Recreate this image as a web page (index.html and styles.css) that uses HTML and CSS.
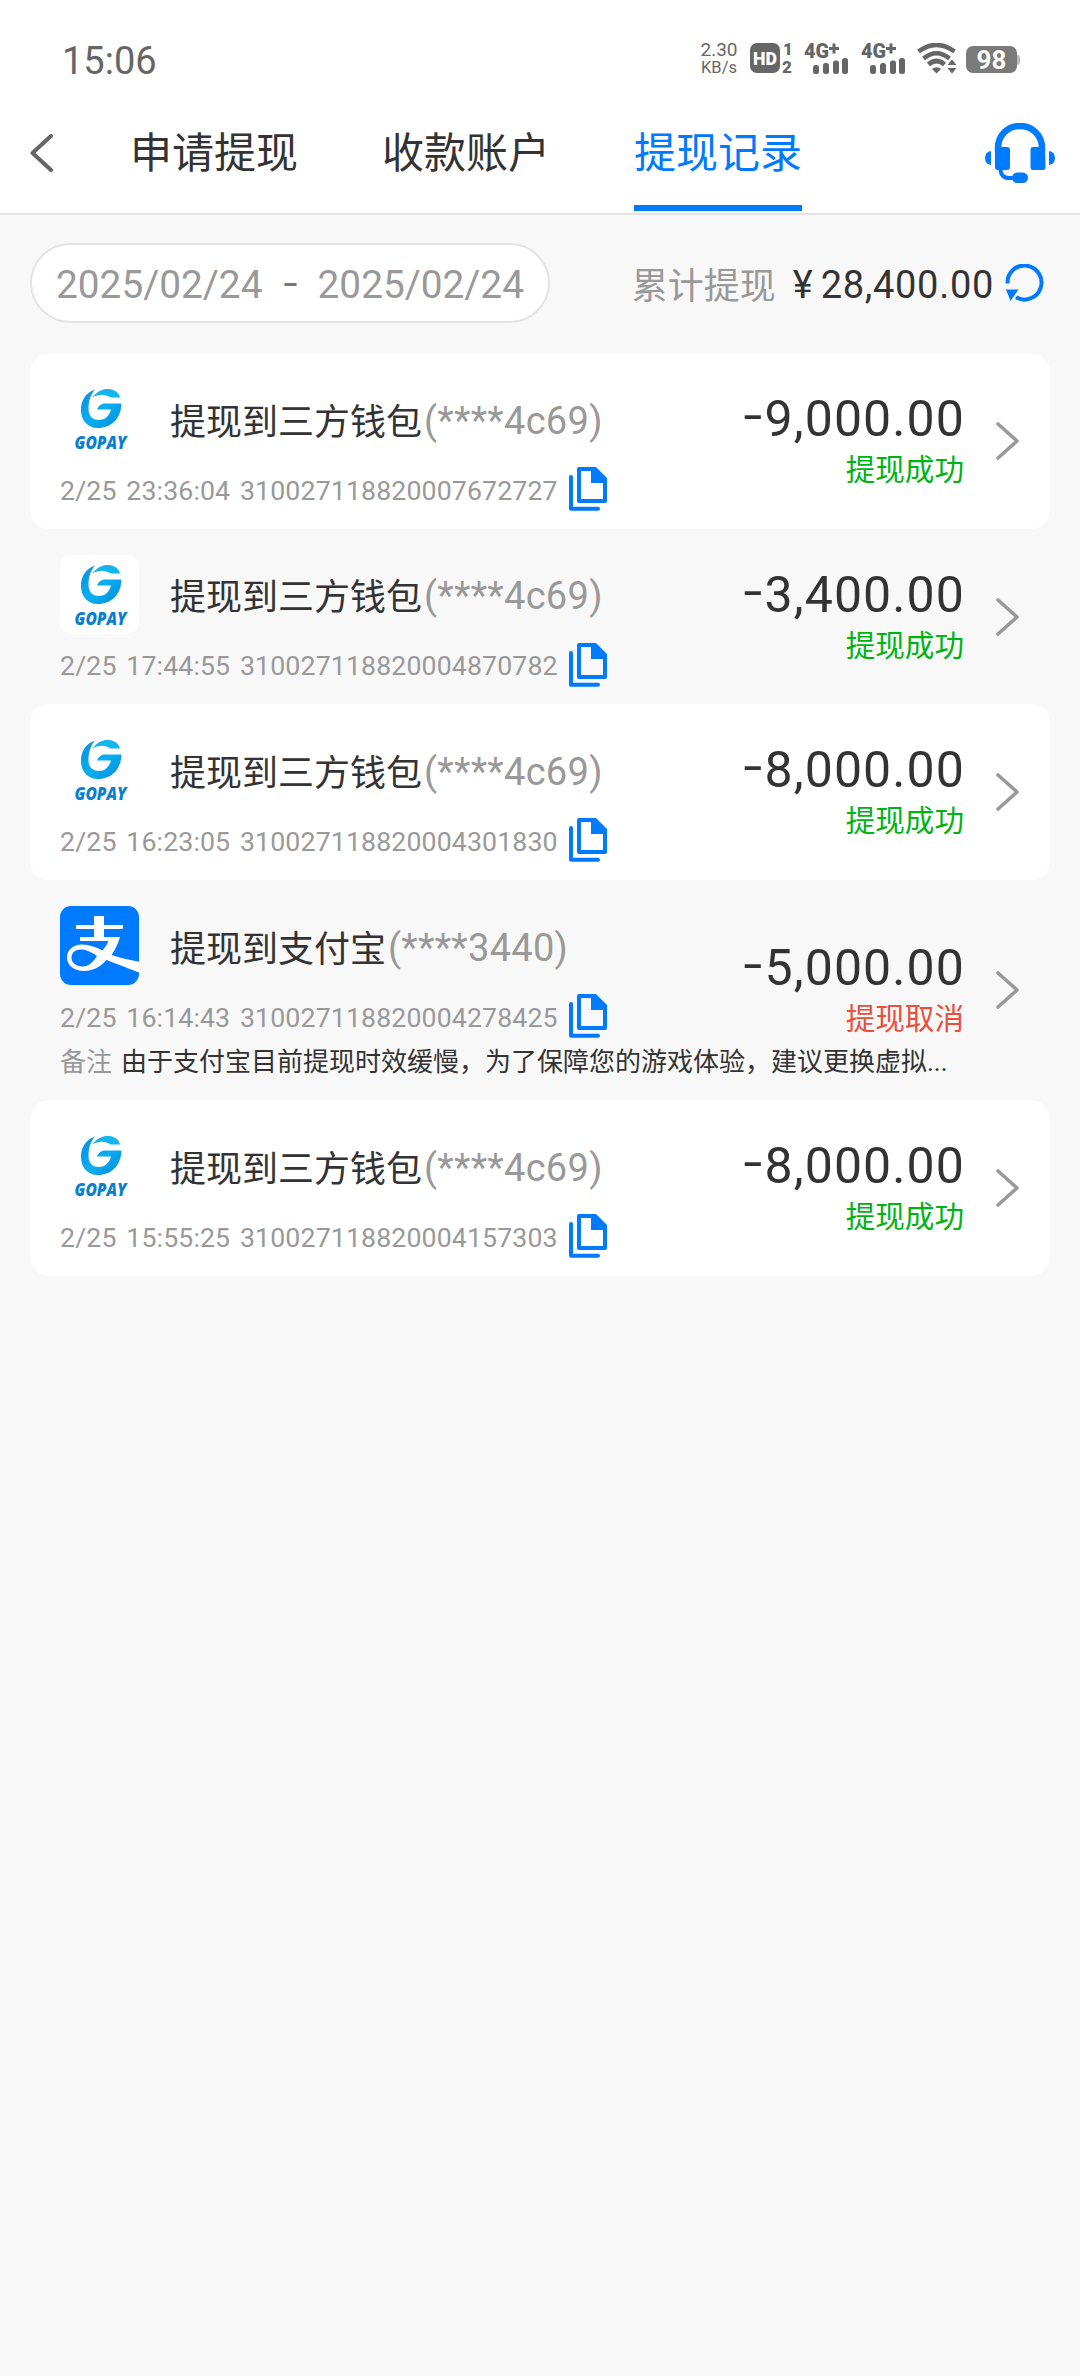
FILE: index.html
```html
<!DOCTYPE html>
<html lang="zh-CN">
<head>
    <meta charset="UTF-8">
    <title>提现记录</title>
    <link rel="stylesheet" href="styles.css">
</head>
<body>
    <!-- Shared icons -->
    <svg class="symbols" width="0" height="0">
        <defs>
            <linearGradient id="gopayFill" x1="0" y1="0" x2="1" y2="1">
                <stop offset="0" stop-color="#0a8fe0"/>
                <stop offset="0.55" stop-color="#0aaef0"/>
                <stop offset="1" stop-color="#0088dc"/>
            </linearGradient>
        </defs>
        <symbol id="gopay" viewBox="0 0 79 79">
            <rect width="79" height="79" rx="11" fill="#fff"/>
            <path fill="url(#gopayFill)" d="M35 10.500C25 14 20.500 22.500 21 32C21.500 42 28 49 38 49C51 49 61 40 61.500 24.500H45C41 24.500 38.500 27 37 30.500H51C49 37 45 41 39 41C32 41 28.500 36.500 28.500 30C28.500 21.500 31 15 35 10.500Z"/>
            <path fill="#12b5ee" d="M32.500 18.500C37 12 43 9.500 49 10C55 10.500 59 14 60 18.500H50.500C45 14.500 38 15 32.500 18.500Z"/>
            <text x="40.500" y="70" class="gopay-name" text-anchor="middle" textLength="52" lengthAdjust="spacingAndGlyphs">GOPAY</text>
        </symbol>
        <symbol id="alipay" viewBox="0 0 79 79">
            <rect width="79" height="79" fill="#007aff"/>
            <path fill="#fff" d="M34 10H44V19H63V23H44V31H60C58 38 55 44 51.500 49C60 52 70 54 80 56V67C68 62 57 58 46.500 54C40 61 33 65 24 65C14 65 7 59.500 7 51.500C7 44 13 38.500 22 38.500C29 38.500 36 41 42.500 44.500C45 41.500 47 38.500 48.500 35H20V31H34V23H16V19H34Z"/>
            <path fill="#007aff" d="M37 50C31 46 26 43.500 21 43.500C15 43.500 11.500 47 11.500 51.500C11.500 57 16 60.500 22.500 60.500C29 60.500 33.500 55.500 37 50Z"/>
        </symbol>
        <symbol id="copy" viewBox="0 0 38 44">
            <path d="M2 10V41.800H29" fill="none" stroke="#007aff" stroke-width="4" stroke-linecap="round" stroke-linejoin="round"/>
            <path fill="#007aff" fill-rule="evenodd" d="M10 0H27L38 11V34Q38 36 36 36H10Q8 36 8 34V2Q8 0 10 0ZM12 4V32H34V16H22V4Z"/>
        </symbol>
        <symbol id="arrow" viewBox="0 0 24 38">
            <path d="M2 2L21 19L2 36" fill="none" stroke="#999" stroke-width="3.600" stroke-linecap="round" stroke-linejoin="round"/>
        </symbol>
        <symbol id="signal" viewBox="0 0 46 32">
            <text x="0" y="14.500" class="net-type" textLength="25" lengthAdjust="spacingAndGlyphs">4G</text>
            <path d="M25 5.500H35M30 0.500V10.500" stroke="#666" stroke-width="3"/>
            <rect x="9" y="22" width="6" height="9" rx="2.500"/>
            <rect x="19" y="20" width="6" height="11" rx="2.500"/>
            <rect x="29" y="17.500" width="6" height="13.500" rx="2.500"/>
            <rect x="38" y="15" width="6" height="16" rx="2.500"/>
        </symbol>
    </svg>

    <div class="status-bar">
        <span class="time">15:06</span>
        <div class="status-icons">
            <div class="speed">
                <span class="speed-value">2.30</span>
                <span class="speed-unit">KB/s</span>
            </div>
            <svg class="hd" viewBox="0 0 44 31">
                <rect width="30" height="30" rx="7"/>
                <text x="3" y="22" class="hd-text" textLength="24" lengthAdjust="spacingAndGlyphs">HD</text>
                <text x="33" y="12" class="hd-num">1</text>
                <text x="32" y="30" class="hd-num">2</text>
            </svg>
            <svg class="signal"><use href="#signal"/></svg>
            <svg class="signal"><use href="#signal"/></svg>
            <svg class="wifi" viewBox="0 0 40 31">
                <g fill="none" stroke="#666" stroke-width="4.600">
                    <path d="M1.500 8.500Q19.500 -4.500 37.500 8.500"/>
                    <path d="M6.500 15.500Q19.500 5 32.500 15.500"/>
                    <path d="M11.500 21.500Q19.500 14.500 27.500 21.500"/>
                </g>
                <path d="M15 26Q19.500 22.500 24 26L19.500 30.500Z"/>
                <path d="M30.500 22L35 16.500L39.500 22ZM30.500 25H39.500L35 30.500Z"/>
            </svg>
            <div class="battery">98</div>
        </div>
    </div>

    <header>
        <svg class="back" viewBox="0 0 24 38">
            <path d="M21 2L2.500 19L21 36" fill="none" stroke="#666" stroke-width="4" stroke-linecap="round" stroke-linejoin="round"/>
        </svg>
        <nav class="tabs">
            <a class="tab">申请提现</a>
            <a class="tab">收款账户</a>
            <a class="tab active">提现记录</a>
        </nav>
        <svg class="service" viewBox="0 0 70 60">
            <path d="M13 28V25C13 12.500 22.500 3 35 3S57 12.500 57 25V28" fill="none" stroke="#007aff" stroke-width="6.500"/>
            <path d="M10 24H22Q25 24 25 27V44Q25 47 22 47H12.500Q10 47 10 44ZM60 24H48Q45.500 24 45.500 27V44Q45.500 47 48 47H58Q60.500 47 60.500 44Z"/>
            <path d="M6 28V42Q0 41 0 35T6 28ZM64 28V42Q70 41 70 35T64 28Z"/>
            <path d="M15.500 46C15.500 52 19 55 24 55H30" fill="none" stroke="#007aff" stroke-width="4"/>
            <rect x="27" y="49.500" width="16" height="10.500" rx="5.200"/>
        </svg>
    </header>

    <main>
        <div class="filter">
            <div class="date-range">
                <span>2025/02/24</span>
                <span class="dash">-</span>
                <span>2025/02/24</span>
            </div>
            <div class="total">
                <span class="total-label">累计提现</span>
                <span class="yen">¥</span>
                <span class="total-value">28,400.00</span>
                <svg class="refresh" viewBox="0 0 40 38">
                    <path d="M2.500 19.500A17 17 0 1 1 11 33.300" fill="none" stroke="#007aff" stroke-width="4"/>
                    <path d="M1 25.500H13.500L5.500 37Z"/>
                </svg>
            </div>
        </div>

        <!-- Withdrawal records -->
        <div class="records">
            <div class="record">
                <div class="info">
                    <div class="account">
                        <svg class="wallet"><use href="#gopay"/></svg>
                        <span class="name">提现到三方钱包</span><span class="number">(****4c69)</span>
                    </div>
                    <div class="order">
                        <span>2/25 23:36:04 310027118820007672727</span>
                        <svg class="copy"><use href="#copy"/></svg>
                    </div>
                </div>
                <div class="result">
                    <span class="amount"><span class="minus">-</span>9,000.00</span>
                    <span class="state">提现成功</span>
                </div>
                <svg class="arrow"><use href="#arrow"/></svg>
            </div>

            <div class="record">
                <div class="info">
                    <div class="account">
                        <svg class="wallet"><use href="#gopay"/></svg>
                        <span class="name">提现到三方钱包</span><span class="number">(****4c69)</span>
                    </div>
                    <div class="order">
                        <span>2/25 17:44:55 310027118820004870782</span>
                        <svg class="copy"><use href="#copy"/></svg>
                    </div>
                </div>
                <div class="result">
                    <span class="amount"><span class="minus">-</span>3,400.00</span>
                    <span class="state">提现成功</span>
                </div>
                <svg class="arrow"><use href="#arrow"/></svg>
            </div>

            <div class="record">
                <div class="info">
                    <div class="account">
                        <svg class="wallet"><use href="#gopay"/></svg>
                        <span class="name">提现到三方钱包</span><span class="number">(****4c69)</span>
                    </div>
                    <div class="order">
                        <span>2/25 16:23:05 310027118820004301830</span>
                        <svg class="copy"><use href="#copy"/></svg>
                    </div>
                </div>
                <div class="result">
                    <span class="amount"><span class="minus">-</span>8,000.00</span>
                    <span class="state">提现成功</span>
                </div>
                <svg class="arrow"><use href="#arrow"/></svg>
            </div>

            <div class="record has-note">
                <div class="info">
                    <div class="account">
                        <svg class="wallet"><use href="#alipay"/></svg>
                        <span class="name">提现到支付宝</span><span class="number">(****3440)</span>
                    </div>
                    <div class="order">
                        <span>2/25 16:14:43 310027118820004278425</span>
                        <svg class="copy"><use href="#copy"/></svg>
                    </div>
                    <p class="note"><span class="note-label">备注</span>由于支付宝目前提现时效缓慢，为了保障您的游戏体验，建议更换虚拟...</p>
                </div>
                <div class="result">
                    <span class="amount"><span class="minus">-</span>5,000.00</span>
                    <span class="state cancelled">提现取消</span>
                </div>
                <svg class="arrow"><use href="#arrow"/></svg>
            </div>

            <div class="record">
                <div class="info">
                    <div class="account">
                        <svg class="wallet"><use href="#gopay"/></svg>
                        <span class="name">提现到三方钱包</span><span class="number">(****4c69)</span>
                    </div>
                    <div class="order">
                        <span>2/25 15:55:25 310027118820004157303</span>
                        <svg class="copy"><use href="#copy"/></svg>
                    </div>
                </div>
                <div class="result">
                    <span class="amount"><span class="minus">-</span>8,000.00</span>
                    <span class="state">提现成功</span>
                </div>
                <svg class="arrow"><use href="#arrow"/></svg>
            </div>
        </div>
    </main>
</body>
</html>
```
FILE: styles.css
```css
* {
    box-sizing: border-box;
}

body {
    margin: 0;
    min-height: 2376px;
    background-color: #f8f8f8;
    color: #333;
    font-family: Roboto, "Noto Sans CJK SC", sans-serif;
}

svg {
    display: block;
    flex: none;
}

.symbols {
    position: absolute;
    visibility: hidden;
}

/* Status bar */
.status-bar {
    display: flex;
    justify-content: space-between;
    height: 100px;
    padding: 0 60px 0 62px;
    background-color: #fff;
    color: #666;
    fill: #666;
}

.time {
    margin-top: 39px;
    font-size: 38px;
    line-height: 44px;
}

.status-icons {
    display: flex;
    align-items: flex-start;
    margin-top: 43px;
}

.speed {
    display: flex;
    flex-direction: column;
    align-items: center;
    width: 38px;
    margin-right: 12px;
}

.speed-value {
    font-size: 19px;
    line-height: 14px;
}

.speed-unit {
    margin-top: 2px;
    font-size: 16.500px;
    line-height: 17px;
}

.hd {
    width: 44px;
    height: 31px;
    margin-right: 10px;
}

.hd-text {
    font: 900 18px Roboto, sans-serif;
    fill: #fff;
}

.hd-num {
    font: 900 17px Roboto, sans-serif;
}

.signal {
    width: 46px;
    height: 32px;
    margin-right: 11px;
}

.net-type {
    font: 900 20px Roboto, sans-serif;
}

.wifi {
    width: 40px;
    height: 31px;
    margin: 0 9px 0 -1px;
}

.battery {
    position: relative;
    width: 51px;
    height: 27px;
    margin: 3px 3px 0 0;
    border-radius: 7px;
    background-color: #7a7a7a;
    color: #fff;
    font: bold 26px/29px Roboto, sans-serif;
    text-align: center;
}

.battery::after {
    content: "";
    position: absolute;
    left: 51px;
    top: 9px;
    width: 3px;
    height: 10px;
    border-radius: 0 3px 3px 0;
    background-color: #bbb;
}

/* Header */
header {
    display: flex;
    align-items: center;
    height: 115px;
    padding: 0 25px 0 30px;
    border-bottom: 2px solid #e3e3e3;
    background-color: #fff;
}

.back {
    width: 24px;
    height: 38px;
    margin-bottom: 7px;
}

.tabs {
    display: flex;
    flex: 1;
    gap: 84px;
    align-self: stretch;
    margin-left: 76px;
}

.tab {
    height: 111px;
    font-size: 42px;
    line-height: 108px;
    white-space: nowrap;
}

.tab.active {
    border-bottom: 6px solid #007aff;
    color: #007aff;
}

.service {
    width: 70px;
    height: 60px;
    margin-bottom: 7px;
    fill: #007aff;
}

/* Filter */
main {
    padding: 28px 30px;
}

.filter {
    display: flex;
    align-items: center;
    justify-content: space-between;
    height: 80px;
    margin-bottom: 30px;
    padding-right: 5px;
}

.date-range {
    display: flex;
    align-items: center;
    justify-content: space-between;
    width: 520px;
    height: 80px;
    padding: 2px 24px 0 24px;
    border: 2px solid #e3e3e3;
    border-radius: 40px;
    background-color: #fff;
    color: #999;
    font-size: 38.800px;
}

.dash {
    color: #777;
    transform: translateY(-2px) scaleX(1.3);
}

.total {
    display: flex;
    align-items: center;
    font-size: 38px;
}

.total-label {
    color: #999;
    font-size: 36px;
}

.yen {
    margin: 3px 8px 0 17px;
}

.total-value {
    margin-top: 3px;
    letter-spacing: 0.700px;
}

.refresh {
    width: 40px;
    height: 38px;
    margin-left: 11px;
    fill: #007aff;
}

/* Records */
.record {
    display: flex;
    align-items: center;
    height: 175.700px;
    padding: 0 30px;
    border-radius: 20px;
}

.record:nth-child(odd) {
    background-color: #fff;
}

.record.has-note {
    height: 220px;
}

.info {
    align-self: flex-start;
    width: 560px;
    padding-top: 26px;
    white-space: nowrap;
}

.account {
    display: flex;
    align-items: center;
    height: 79px;
}

.wallet {
    width: 79px;
    height: 79px;
    margin-right: 31px;
    border-radius: 11px;
    overflow: hidden;
}

.gopay-name {
    font: italic 800 17.500px "Open Sans", sans-serif;
    fill: #0a7fd0;
}

.name {
    font-size: 36px;
}

.number {
    margin: 4px 0 0 2px;
    color: #999;
    font-size: 38px;
    letter-spacing: 0.300px;
}

.order {
    display: flex;
    align-items: center;
    height: 44px;
    margin-top: 9px;
    color: #999;
    font-size: 26.700px;
    letter-spacing: 0.130px;
    word-spacing: 3px;
}

.order span {
    padding-top: 3px;
}

.copy {
    width: 38px;
    height: 44px;
    margin-left: 11px;
}

.note {
    margin: 1px 0 0;
    font-size: 26px;
    line-height: 46px;
}

.note-label {
    margin-right: 9px;
    color: #999;
}

.result {
    display: flex;
    flex: 1;
    flex-direction: column;
    align-items: flex-end;
    margin-right: 31px;
}

.amount {
    font-size: 50px;
    line-height: 58px;
    letter-spacing: 1.100px;
}

.minus {
    display: inline-block;
    margin-right: 4px;
    transform: translateY(-4px) scaleX(1.35);
}

.state {
    margin-right: 1px;
    color: #00b312;
    font-size: 29.600px;
    line-height: 44px;
}

.state.cancelled {
    color: #ea4e3d;
}

.arrow {
    width: 24px;
    height: 38px;
}
```
